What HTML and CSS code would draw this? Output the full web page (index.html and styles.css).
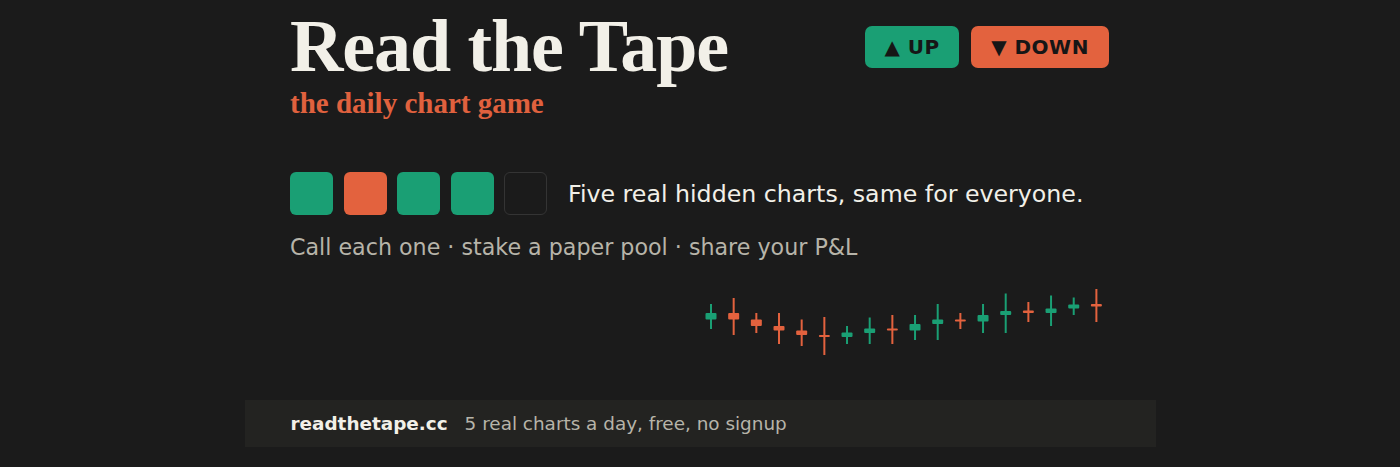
FILE: index.html
```html
<!DOCTYPE html>
<html lang="en">
<head>
   <meta charset="utf-8">
   <title>Read the Tape</title>
   <link rel="stylesheet" href="styles.css">
</head>
<body>

   <div class="page">
      <!-- Title and call buttons -->
      <header class="top">
         <div class="brand">
            <h1>Read the Tape</h1>
            <div class="tagline">the daily chart game</div>
         </div>
         <div class="calls">
            <button class="call up">&#9650; UP</button>
            <button class="call down">&#9660; DOWN</button>
         </div>
      </header>

      <!-- Today's five results -->
      <div class="streak">
         <div class="tiles">
            <span class="tile win"></span>
            <span class="tile loss"></span>
            <span class="tile win"></span>
            <span class="tile win"></span>
            <span class="tile empty"></span>
         </div>
         <p class="lead">Five real hidden charts, same for everyone.</p>
      </div>
      <p class="sub">Call each one &middot; stake a paper pool &middot; share your P&amp;L</p>

      <!-- Mini candlestick chart -->
      <div class="chart">
         <svg id="candles" width="410" height="70" viewBox="700 285 410 70"></svg>
      </div>
   </div>

   <footer class="foot">
      <strong>readthetape.cc</strong>
      <span>5 real charts a day, free, no signup</span>
   </footer>

   <script>
      // [wick top, wick bottom, body top, body bottom, up?]
      const bars = [
         [303, 328, 312, 318.5, 1],
         [297, 334, 312, 318.5, 0],
         [312, 332, 318.5, 325, 0],
         [312, 343, 325, 329.5, 0],
         [318.5, 345, 329.5, 334, 0],
         [316, 354, 334, 336, 0],
         [325, 343, 331.5, 336, 1],
         [316.5, 343, 327.5, 332, 1],
         [314, 343, 327.5, 329.5, 0],
         [314, 339, 323, 329.5, 1],
         [303, 339, 318.5, 323, 1],
         [312, 328, 318.5, 320.5, 0],
         [303, 332, 314, 320.5, 1],
         [292.5, 332, 310, 314, 1],
         [301, 321, 309.5, 312, 0],
         [294.5, 325, 307.5, 312, 1],
         [296.5, 314, 303.5, 307.5, 1],
         [288, 321, 303, 305.5, 0]
      ];

      const svg = document.getElementById("candles");
      const ns = "http://www.w3.org/2000/svg";

      bars.forEach(function (b, i) {
         const x = 711 + i * 22.67;
         const colour = b[4] ? "#1a9f74" : "#e3623e";

         const wick = document.createElementNS(ns, "rect");
         wick.setAttribute("x", x - 1);
         wick.setAttribute("y", b[0]);
         wick.setAttribute("width", 2);
         wick.setAttribute("height", b[1] - b[0]);
         wick.setAttribute("fill", colour);
         svg.appendChild(wick);

         const body = document.createElementNS(ns, "rect");
         body.setAttribute("x", x - 5.5);
         body.setAttribute("y", b[2]);
         body.setAttribute("width", 11);
         body.setAttribute("height", Math.max(b[3] - b[2], 2));
         body.setAttribute("rx", 1);
         body.setAttribute("fill", colour);
         svg.appendChild(body);
      });
   </script>
</body>
</html>
```

FILE: styles.css
```css
* {
   margin: 0;
   padding: 0;
   box-sizing: border-box;
}

body {
   background: #1b1b1b;
   color: #f2f0e8;
   font-family: 'DejaVu Sans', sans-serif;
}

.page {
   width: 820px;
   margin: 0 auto;
}

/* Header */
.top {
   display: flex;
   justify-content: space-between;
   align-items: flex-start;
   padding-top: 9px;
}

.brand h1 {
   font-family: 'Liberation Serif', serif;
   font-size: 74px;
   line-height: 1;
   font-weight: 700;
   letter-spacing: -1.1px;
   color: #f2f0e8;
}

.tagline {
   font-family: 'Liberation Serif', serif;
   font-size: 29px;
   line-height: 1;
   font-weight: 700;
   color: #e0613e;
   margin-top: 6px;
}

.calls {
   display: flex;
   gap: 12px;
   margin-top: 17px;
   margin-right: 1px;
}

.call {
   height: 42px;
   padding: 0;
   border: 0;
   border-radius: 7px;
   font-family: 'DejaVu Sans', sans-serif;
   font-size: 20px;
   font-weight: 700;
   letter-spacing: 0.5px;
   color: #161616;
   cursor: pointer;
}

.call.up {
   width: 94px;
   background: #1a9f74;
}

.call.down {
   width: 138px;
   background: #e3623e;
}

/* Result tiles */
.streak {
   display: flex;
   align-items: center;
   gap: 21px;
   margin-top: 54px;
}

.tiles {
   display: flex;
   gap: 10.5px;
}

.tile {
   width: 43px;
   height: 43px;
   border-radius: 6px;
}

.tile.win {
   background: #1a9f74;
}

.tile.loss {
   background: #e3623e;
}

.tile.empty {
   border: 1.5px solid #343434;
}

.lead {
   font-size: 23.7px;
   color: #f2f0e8;
}

.sub {
   margin-top: 19px;
   font-size: 22.2px;
   color: #b7b4a9;
}

.chart {
   display: flex;
   justify-content: flex-end;
   margin-top: 26px;
}

/* Footer strip */
.foot {
   width: 911px;
   margin: 44px auto 0;
   padding: 12px 46px;
   background: #232321;
   font-size: 18.4px;
   line-height: 23px;
   display: flex;
   gap: 17px;
}

.foot strong {
   color: #f2f0e8;
}

.foot span {
   color: #b7b4a9;
}
```
